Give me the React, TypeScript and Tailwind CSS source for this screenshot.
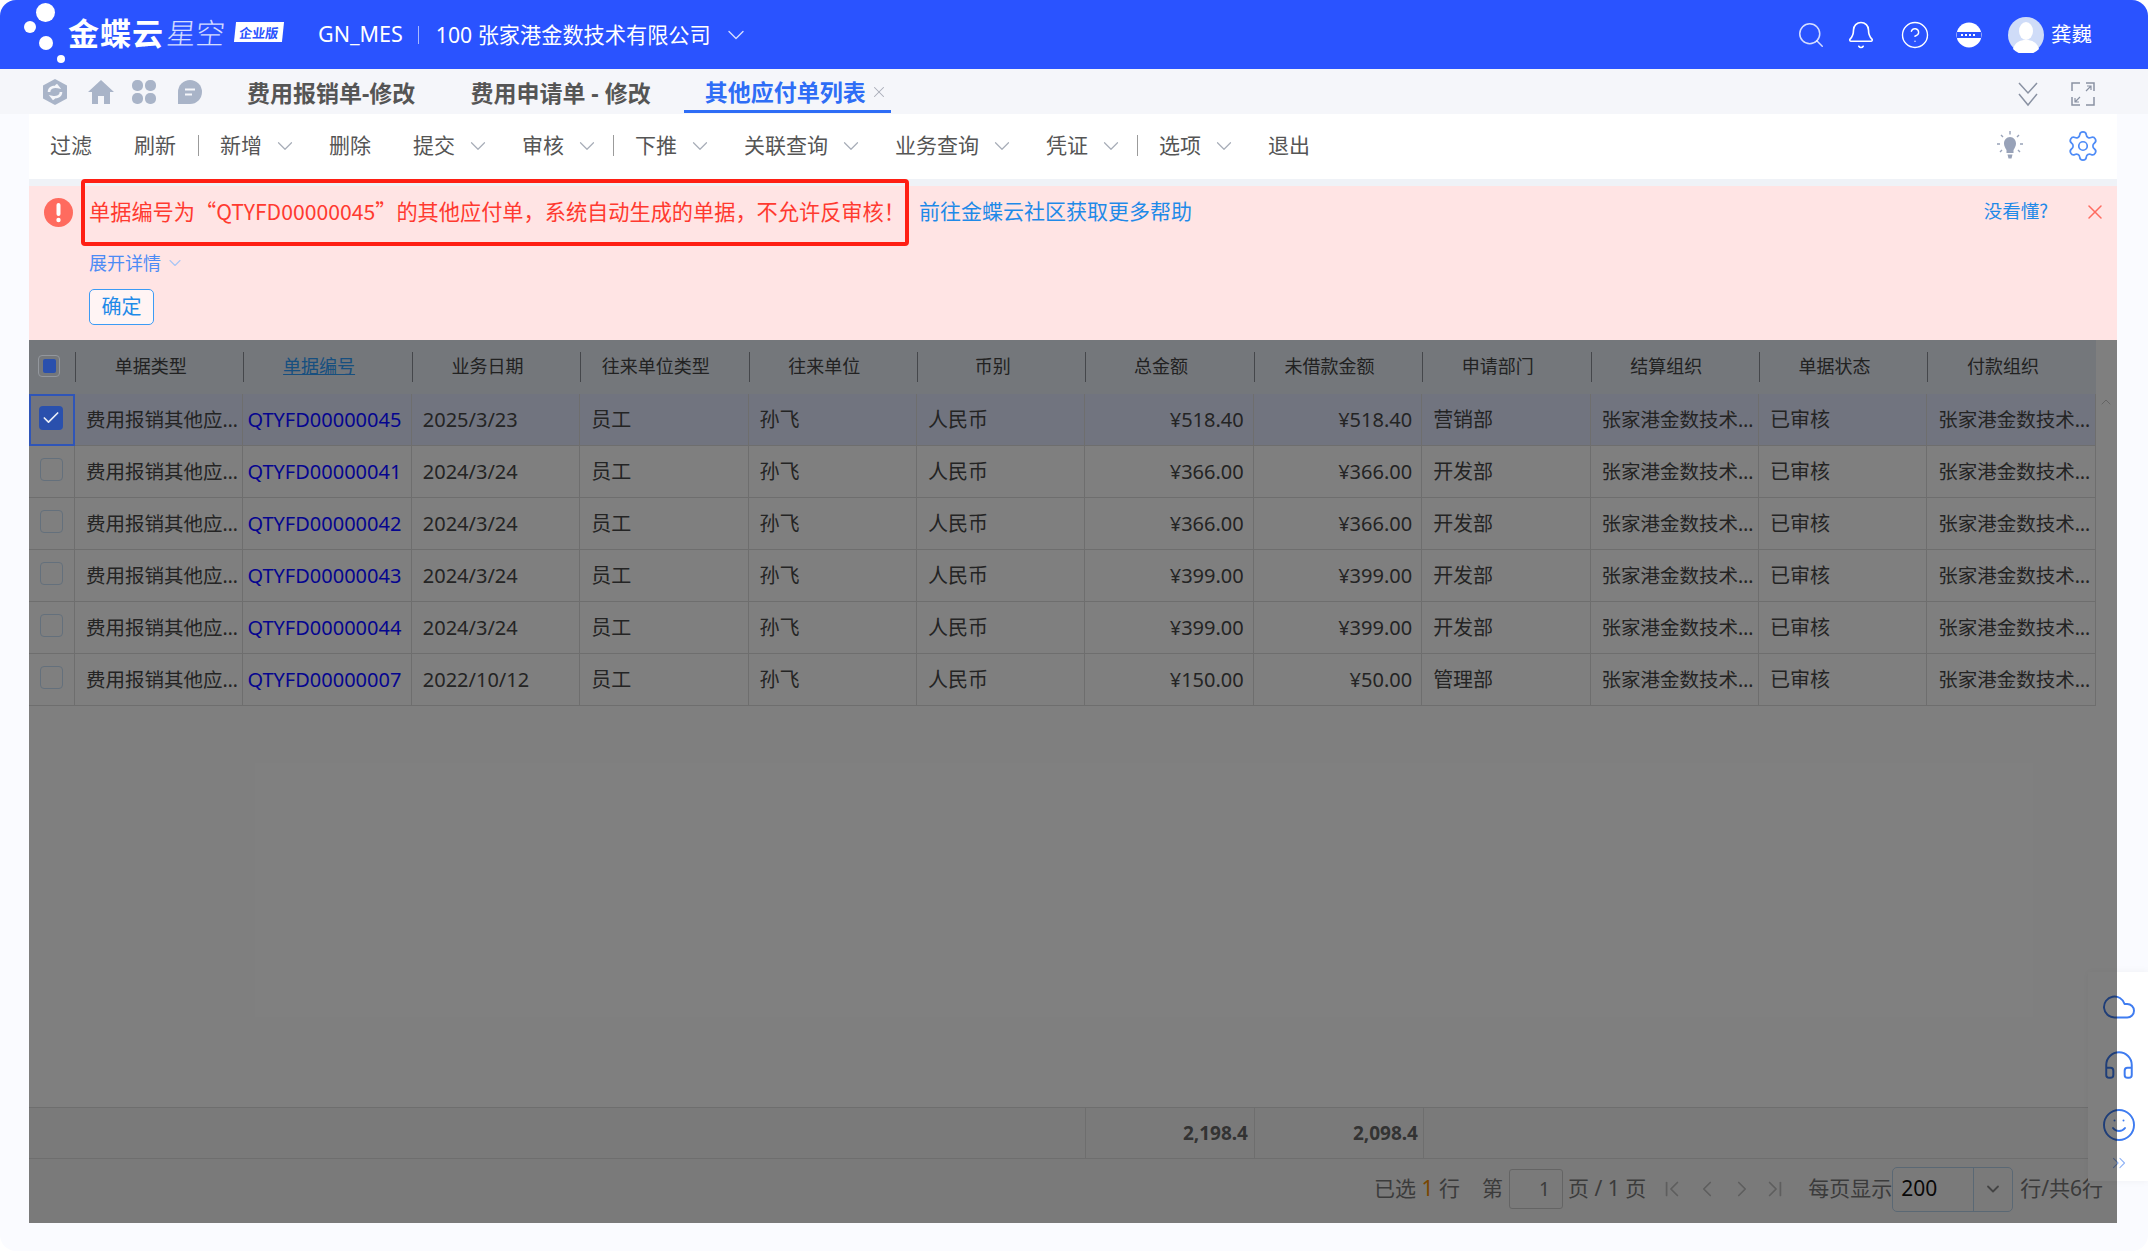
import React from "react";
import { Search, Bell, CircleHelp, ChevronDown, ChevronUp, X, Check, Cloud, Headphones, Smile, ChevronsRight, ChevronLeft, ChevronRight, ChevronFirst, ChevronLast, Settings } from "lucide-react";

const Chev = ({ cls = "" }: { cls?: string }) => (
  <ChevronDown size={26} strokeWidth={1.1} className={"text-[#a7adb8] " + cls} />
);

const ToolDivider = () => <span className="w-px h-[21px] bg-[#9b9b9b]" />;

const ToolItem = ({ label, chev, cls }: { label: string; chev?: boolean; cls: string }) => (
  <div className={"flex items-center shrink-0 " + cls}>
    <span>{label}</span>
    {chev && <Chev cls="ml-[10px]" />}
  </div>
);

const rows = [
  ["QTYFD00000045", "2025/3/23", "¥518.40", "¥518.40", "营销部"],
  ["QTYFD00000041", "2024/3/24", "¥366.00", "¥366.00", "开发部"],
  ["QTYFD00000042", "2024/3/24", "¥366.00", "¥366.00", "开发部"],
  ["QTYFD00000043", "2024/3/24", "¥399.00", "¥399.00", "开发部"],
  ["QTYFD00000044", "2024/3/24", "¥399.00", "¥399.00", "开发部"],
  ["QTYFD00000007", "2022/10/12", "¥150.00", "¥50.00", "管理部"],
];

const headers = ["单据类型", "单据编号", "业务日期", "往来单位类型", "往来单位", "币别", "总金额", "未借款金额", "申请部门", "结算组织", "单据状态", "付款组织"];

const gridCols = "grid grid-cols-[46px_repeat(12,168.4px)] w-[2067px]";
const cell = "h-[52px] flex items-center pt-[1px] border-r border-b border-[#dcdcdc] text-[20px] text-[#484848] min-w-0";
const clipped = "h-[52px] flex items-center pt-[1px] pl-[11px] pr-[1px] border-r border-b border-[#dcdcdc] text-[19.500px] text-[#484848] min-w-0";

const TabIcons = () => (
  <div className="flex items-center text-[#a9b4c8]">
    <svg width="26" height="28" viewBox="0 0 26 28" className="ml-[42px]" fill="currentColor">
      <path d="M13 1 25 7.500v13L13 27 1 20.500v-13Z" />
      <path d="M7 14c0-4 4-6 9-5l-2-2.500M19 14c0 4-4 6-9 5l2 2.500" fill="none" stroke="#f5f6fa" strokeWidth="2.600" />
    </svg>
    <svg width="28" height="26" viewBox="0 0 28 26" className="ml-[19px]" fill="currentColor">
      <path d="M14 1 27 13h-4v12h-6v-8h-6v8H5V13H1Z" />
    </svg>
    <svg width="26" height="26" viewBox="0 0 26 26" className="ml-[16px]" fill="currentColor">
      <rect x="1" y="1" width="11" height="11" rx="5" />
      <rect x="14" y="1" width="11" height="11" rx="5" />
      <rect x="1" y="14" width="11" height="11" rx="5" />
      <rect x="14" y="14" width="11" height="11" rx="5" />
    </svg>
    <svg width="26" height="26" viewBox="0 0 26 26" className="ml-[20px]" fill="currentColor">
      <path d="M13 1a12 12 0 0 1 0 24H1V13A12 12 0 0 1 13 1Z" />
      <path d="M8 10.500h10M8 15.500h7" stroke="#f5f6fa" strokeWidth="2" />
    </svg>
  </div>
);

export default function App() {
  return (
    <div className="relative h-[1251px] w-full overflow-hidden rounded-[16px] bg-[#fafbff] flex flex-col font-['Noto_Sans','Noto_Sans_CJK_SC',sans-serif]">
      {/* Header */}
      <header className="h-[69px] shrink-0 bg-[#2a53ff] text-white flex items-center relative">
        <div className="relative w-[68px] h-[69px] shrink-0">
          <span className="absolute left-[36px] top-[3px] w-[19px] h-[19px] rounded-full bg-white" />
          <span className="absolute left-[24px] top-[21px] w-[12px] h-[12px] rounded-full bg-white" />
          <span className="absolute left-[39px] top-[36px] w-[14px] h-[14px] rounded-full bg-white" />
          <span className="absolute left-[57px] top-[55px] w-[8px] h-[8px] rounded-full bg-white" />
        </div>
        <span className="text-[31px] font-bold tracking-[1px] font-['Noto_Sans_CJK_SC',sans-serif] leading-none mb-[6px]">金蝶云</span>
        <span className="ml-[3px] text-[29px] font-light text-white/80 -skew-x-6 font-['Noto_Sans_CJK_SC',sans-serif] leading-none mb-[6px]">星空</span>
        <span className="ml-[10px] w-[48px] h-[20px] -skew-x-6 bg-white text-[#2a53ff] text-[13px] font-bold flex items-center justify-center leading-none font-['Noto_Sans_CJK_SC',sans-serif] mb-[5px]">企业版</span>
        <span className="ml-[35px] text-[21.500px]">GN_MES</span>
        <span className="ml-[15px] w-px h-[18px] bg-white/60" />
        <span className="ml-[17px] text-[21.200px]">100 张家港金数技术有限公司</span>
        <ChevronDown size={28} strokeWidth={1.2} className="ml-[11px] text-white/80" />
        <div className="ml-auto flex items-center mr-[56px]">
          <Search size={30} strokeWidth={1.2} className="text-white/80" />
          <Bell size={30} strokeWidth={1.3} className="ml-[20px]" />
          <CircleHelp size={30} strokeWidth={1.1} className="ml-[24px]" />
          <svg width="26" height="26" viewBox="0 0 26 26" className="ml-[26px]">
            <circle cx="13" cy="13" r="12.500" fill="white" />
            <rect x="1" y="10" width="24" height="6" fill="#2a53ff" />
            <path d="M5 13h16" stroke="white" strokeWidth="2" strokeDasharray="2 2" />
          </svg>
          <svg width="36" height="36" viewBox="0 0 36 36" className="ml-[26px]">
            <circle cx="18" cy="18" r="18" fill="#cfdcf8" />
            <ellipse cx="18" cy="14" rx="7" ry="9" fill="white" />
            <path d="M5 32c2-7 7-9 13-9s11 2 13 9a18 18 0 0 1-26 0Z" fill="white" />
          </svg>
          <span className="ml-[7px] text-[20.500px]">龚巍</span>
        </div>
      </header>

      {/* Tabs */}
      <div className="h-[45px] shrink-0 bg-[#f5f6fa] flex items-center">
        <TabIcons />
        <span className="ml-[44px] text-[23px] font-bold text-[#555] pt-[3px]">费用报销单-修改</span>
        <span className="ml-[55px] text-[23px] font-bold text-[#555] pt-[3px]">费用申请单 - 修改</span>
        <div className="ml-[33px] w-[207px] h-[44px] self-start border-b-[3px] border-[#2e6df6] flex items-center pl-[21px] text-[#2e6df6] pt-[5px]">
          <span className="text-[23px] font-bold whitespace-nowrap">其他应付单列表</span>
          <X size={18} strokeWidth={1.4} className="ml-[4px] text-[#a9aeb8]" />
        </div>
        <div className="ml-auto flex items-center mr-[52px] text-[#8a92a3] pt-[5px]">
          <svg width="22" height="26" viewBox="0 0 22 26" fill="none" stroke="currentColor" strokeWidth="1.500">
            <path d="M2 2l9 10 9-10M2 13l9 11 9-11" />
          </svg>
          <svg width="26" height="26" viewBox="0 0 26 26" className="ml-[31px]" fill="none" stroke="currentColor" strokeWidth="1.500">
            <path d="M10 2H2v8M16 2h8v8M10 24H2v-8M16 24h8v-8" />
            <path d="M16 10l5-5M10 16l-5 5M17 5h4v4M9 21H5v-4" strokeWidth="1.200" />
          </svg>
        </div>
      </div>

      {/* Main */}
      <main className="flex-1 flex flex-col pl-[29px] pr-[31px] min-h-0">
        <div className="h-[65px] shrink-0 bg-white flex items-center pb-[2px] pl-[21px] pr-[17px] text-[21px] text-[#555]">
          <ToolItem label="过滤" cls="mr-[42px]" />
          <ToolItem label="刷新" cls="mr-[22px]" />
          <ToolDivider />
          <ToolItem label="新增" chev cls="ml-[21px] mr-[31px]" />
          <ToolItem label="删除" cls="mr-[42px]" />
          <ToolItem label="提交" chev cls="mr-[31px]" />
          <ToolItem label="审核" chev cls="mr-[13px]" />
          <ToolDivider />
          <ToolItem label="下推" chev cls="ml-[21px] mr-[31px]" />
          <ToolItem label="关联查询" chev cls="mr-[31px]" />
          <ToolItem label="业务查询" chev cls="mr-[31px]" />
          <ToolItem label="凭证" chev cls="mr-[13px]" />
          <ToolDivider />
          <ToolItem label="选项" chev cls="ml-[21px] mr-[31px]" />
          <ToolItem label="退出" cls="" />
          <svg width="28" height="32" viewBox="0 0 28 30" className="ml-auto text-[#98a2b8]" fill="currentColor">
            <path d="M14 6c3.600 0 6 3 6 6.500 0 2.400-1.200 4.400-2.500 6.500v3h-7v-3C9.200 16.900 8 14.900 8 12.500 8 9 10.400 6 14 6Z" />
            <path d="M11.500 23.500h5l-1 4h-3Z" />
            <path d="M14 0v3.500M5 4l2 2M23 4l-2 2M1 13h3M24 13h3M4 21l2-2M24 21l-2-2" stroke="currentColor" strokeWidth="1.400" />
          </svg>
          <Settings size={34} strokeWidth={1.2} className="ml-[42px] text-[#4f8cf7]" />
        </div>
        <div className="h-[7px] shrink-0 bg-[#eff2f7]" />

        {/* Message */}
        <section className="relative h-[154px] shrink-0 bg-[#ffe4e4] pl-[60px]">
          <svg width="29" height="29" viewBox="0 0 29 29" className="absolute left-[15px] top-[12px]">
            <circle cx="14.500" cy="14.500" r="14.500" fill="#ff6b5f" />
            <rect x="12.500" y="5" width="4" height="13" rx="2" fill="white" />
            <circle cx="14.500" cy="22" r="2.200" fill="white" />
          </svg>
          <div className="flex items-center h-[52px] pb-[2px] text-[21.200px] font-['Noto_Sans_CJK_SC',sans-serif]">
            <span className="text-[#ff3a30] whitespace-nowrap">单据编号为“QTYFD00000045”的其他应付单，系统自动生成的单据，不允许反审核！</span>
            <span className="ml-[14px] text-[#1f8ae8] text-[21px] whitespace-nowrap">前往金蝶云社区获取更多帮助</span>
            <span className="ml-auto mr-[69px] text-[#1f8ae8] text-[18.500px]">没看懂?</span>
          </div>
          <X size={24} strokeWidth={1.5} className="absolute right-[10px] top-[14px] text-[#ff6b60]" />
          <div className="flex items-center h-[26px] mt-[12px] text-[18px] text-[#4c8bf5]">
            <span>展开详情</span>
            <ChevronDown size={20} strokeWidth={1.3} className="ml-[4px] text-[#a8c6f5]" />
          </div>
          <button className="mt-[13px] w-[65px] h-[36px] rounded-[5px] border border-[#3b9bf5] bg-[#fff4f4] text-[#1f8ae8] text-[20px] flex items-center justify-center">确定</button>
          <div className="absolute left-[52px] -top-[7px] w-[828px] h-[67px] border-[4px] border-[#ff1f14] rounded-[4px] pointer-events-none" />
        </section>

        {/* Table */}
        <section className="relative h-[883px] shrink-0 bg-white flex flex-col">
          <div className={gridCols + " h-[54px] bg-[#e8eef6] items-center text-[18px] text-[#444]"}>
            <div className="flex justify-center pr-[6px] mb-[3px] relative z-20">
              <span className="w-[22px] h-[22px] rounded-[4px] border border-[#93979d] flex items-center justify-center">
                <span className="w-[13px] h-[14px] rounded-[2px] bg-[#2a50ad]" />
              </span>
            </div>
            {headers.map((h, i) => (
              <div key={h} className="h-[30px] border-l border-[#8a8f96] flex items-center justify-center pr-[18px] pb-[1px]">
                <span className={i === 1 ? "text-[#2f9fff] underline" : ""}>{h}</span>
              </div>
            ))}
          </div>
          <div className="flex-1 min-h-0 relative">
            {rows.map((r, idx) => (
              <div key={r[0]} className={gridCols + (idx === 0 ? " bg-[#e3e8ff]" : "")}>
                <div className={cell + " justify-center pr-[1px]"}>
                  {idx === 0 ? (
                    <span className="relative z-20 mb-[5px] w-[24px] h-[24px] rounded-[4px] bg-[#2a50ad] flex items-center justify-center text-white/90">
                      <Check size={20} strokeWidth={2} />
                    </span>
                  ) : (
                    <span className="relative z-20 mb-[5px] w-[23px] h-[23px] rounded-[4px] border-[1.500px] border-[#64707c]" />
                  )}
                  {idx === 0 && <span className="absolute left-0 top-0 w-[46px] h-[52px] border-[2px] border-[#2f55b8] z-20" />}
                </div>
                <div className={clipped}><span className="truncate">费用报销其他应付单</span></div>
                <div className={cell + " pl-[4px]"}><span className="relative z-20 text-[#05058f]">{r[0]}</span></div>
                <div className={cell + " pl-[11px]"}>{r[1]}</div>
                <div className={cell + " pl-[11px]"}>员工</div>
                <div className={cell + " pl-[11px]"}>孙飞</div>
                <div className={cell + " pl-[11px]"}>人民币</div>
                <div className={cell + " justify-end pr-[9px]"}>{r[2]}</div>
                <div className={cell + " justify-end pr-[9px]"}>{r[3]}</div>
                <div className={cell + " pl-[11px]"}>{r[4]}</div>
                <div className={clipped}><span className="truncate">张家港金数技术有限公司</span></div>
                <div className={cell + " pl-[11px]"}>已审核</div>
                <div className={clipped}><span className="truncate">张家港金数技术有限公司</span></div>
              </div>
            ))}
            <ChevronUp size={16} strokeWidth={1.5} className="absolute right-[3px] top-[0px] text-[#c8c8c8]" />
          </div>
          <div className="h-[52px] shrink-0 bg-[#f5f5f5] border-y border-[#dcdcdc] flex items-stretch text-[19px] font-bold text-[#666]">
            <div className="w-[1057px] border-r border-[#dcdcdc]" />
            <div className="w-[169px] border-r border-[#dcdcdc] flex items-center justify-end pr-[6px]">2,198.4</div>
            <div className="w-[169px] border-r border-[#dcdcdc] flex items-center justify-end pr-[5px]">2,098.4</div>
          </div>
          <div className="h-[64px] shrink-0 bg-[#f5f5f5] flex items-center pb-[4px] text-[21px] text-[#777] pl-[1345px]">
            <span className="whitespace-nowrap">已选 <span className="text-[#f08a00]">1</span> 行</span>
            <span className="ml-[22px]">第</span>
            <span className="ml-[6px] w-[54px] h-[40px] rounded-[3px] border border-[#c9c9c9] flex items-center justify-end pr-[12px] text-[19px]">1</span>
            <span className="ml-[5px] whitespace-nowrap">页 / 1 页</span>
            <div className="ml-[13px] flex items-center text-[#bdbdbd]">
              <ChevronFirst size={26} strokeWidth={1.6} />
              <ChevronLeft size={26} strokeWidth={1.6} className="ml-[9px]" />
              <ChevronRight size={26} strokeWidth={1.6} className="ml-[9px]" />
              <ChevronLast size={26} strokeWidth={1.6} className="ml-[7px]" />
            </div>
            <span className="ml-[20px] whitespace-nowrap">每页显示</span>
            <div className="w-[121px] h-[45px] rounded-[5px] border border-[#b4d0e8] flex items-center">
              <span className="pl-[8px] w-[80px] text-[#111] text-[21px]">200</span>
              <span className="h-full w-px bg-[#b4d0e8]" />
              <ChevronDown size={20} strokeWidth={2.2} className="ml-[9px] text-[#888]" />
            </div>
            <span className="ml-[7px] whitespace-nowrap">行/共6行</span>
          </div>

          {/* Floating side panel, beneath the mask */}
          <div className="absolute -right-[31px] top-[632px] w-[60px] h-[209px] bg-white shadow-[0_0_8px_rgba(0,0,0,0.05)] z-[5] flex flex-col items-center pl-[2px] text-[#3f7cf0]">
            <Cloud size={36} strokeWidth={1.3} className="mt-[17px]" />
            <Headphones size={34} strokeWidth={1.4} className="mt-[23px]" />
            <Smile size={36} strokeWidth={1.3} className="mt-[25px]" />
            <ChevronsRight size={22} strokeWidth={1.2} className="mt-[9px] text-[#8fb2f5]" />
          </div>

          {/* Modal mask */}
          <div className="absolute inset-0 bg-black/50 z-10" />
        </section>
      </main>
    </div>
  );
}
